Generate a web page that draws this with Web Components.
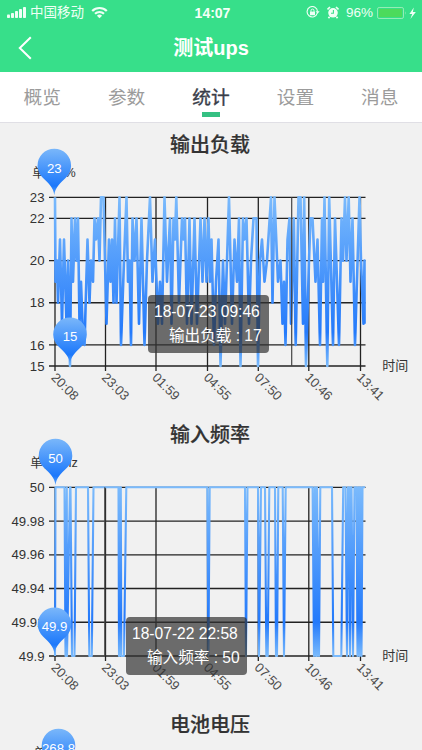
<!DOCTYPE html>
<html lang="zh-CN">
<head>
<meta charset="utf-8">
<title>测试ups</title>
<style>
  html, body { height: 100%; }
  body {
    margin: 0;
    overflow: hidden;
    background: #f1f1f1;
    font-family: "Liberation Sans", "Noto Sans CJK SC", sans-serif;
  }
</style>
</head>
<body>
<ups-app></ups-app>
<script>
customElements.define("status-bar", class extends HTMLElement {
  constructor() {
    super();
    this.attachShadow({ mode: "open" }).innerHTML = `
      <style>
        :host {
          display: grid;
          grid-template-columns: 1fr auto 1fr;
          align-items: center;
          height: 24px;
          padding: 0 6px 0 7px;
          color: #effff5;
          font-size: 13.5px;
          line-height: 24px;
        }
        div { display: flex; align-items: center; }
        .right { justify-content: flex-end; }
        .carrier { padding-top: 1px; }
        .time { font-weight: bold; font-size: 14px; color: #f4fff8; padding-left: 2px; }
        svg { display: block; flex: none; }
        .wifi { margin-left: 7px; }
        .lock { margin-right: 7px; }
        .alarm { margin-right: 7px; }
        .battery { margin-left: 4px; }
      </style>
      <div>
        <svg width="19" height="13" viewBox="0 0 19 13" fill="currentColor" style="margin-right:4px">
          <rect x="0" y="8.5" width="3" height="3.5" rx=".8"/><rect x="4" y="7" width="3" height="5" rx=".8"/>
          <rect x="8" y="5" width="3" height="7" rx=".8"/><rect x="12" y="3" width="3" height="9" rx=".8"/>
          <rect x="16" y="1" width="3" height="11" rx=".8"/>
        </svg>
        <span class="carrier">中国移动</span>
        <svg class="wifi" width="17" height="13" viewBox="0 0 17 13" fill="none" stroke="currentColor" stroke-width="2.2">
          <path d="M1.2 5a10.4 10.4 0 0 1 14.6 0M4 7.8a6.5 6.5 0 0 1 9 0"/>
          <path d="M8.5 12.2 5.9 9.7a3.8 3.8 0 0 1 5.2 0z" fill="currentColor" stroke="none"/>
        </svg>
      </div>
      <div class="time">14:07</div>
      <div class="right">
        <svg class="lock" width="14" height="13" viewBox="0 0 14 13" fill="none" stroke="currentColor">
          <path d="M11.3 7.2a5.2 5.2 0 1 1 .2-1.7" stroke-width="1.1"/>
          <path d="M9.6 5.2h4l-2 2.6z" fill="currentColor" stroke="none"/>
          <rect x="4" y="5.6" width="5" height="3.6" fill="currentColor" stroke="none"/>
          <path d="M5 5.8V4.6a1.5 1.5 0 0 1 3 0v1.2"/>
        </svg>
        <svg class="alarm" width="12" height="13" viewBox="0 0 12 13">
          <circle cx="6" cy="6.8" r="4.8" fill="currentColor"/>
          <path d="M.5 3.4 3 1M11.5 3.4 9 1M2.6 10.8l-1.2 1.3M9.4 10.8l1.2 1.3" stroke="currentColor" stroke-width="1.7"/>
          <path d="M6.4 4v3.2H4" stroke="#37df8a" stroke-width="1.1" fill="none"/>
        </svg>
        <span>96%</span>
        <svg class="battery" width="39" height="14" viewBox="0 0 39 14">
          <rect x=".5" y="1.5" width="26" height="11" rx="1.6" fill="none" stroke="#95edb4"/>
          <rect x="2" y="3" width="23" height="8" rx=".5" fill="#4cdb5c"/>
          <path d="M28 5.2q1.5 1.8 0 3.6z" fill="#95edb4"/>
          <path d="M36.8 1.5 32.4 7.9h2.8l-1.8 5 5.4-6.8h-2.9z" fill="#effff5"/>
        </svg>
      </div>
    `;
  }
});

customElements.define("nav-header", class extends HTMLElement {
  constructor() {
    super();
    this.attachShadow({ mode: "open" }).innerHTML = `
      <style>
        :host {
          display: grid;
          grid-template-columns: 50px 1fr 50px;
          align-items: center;
          height: 48px;
          color: #fff;
        }
        svg { display: block; margin-left: 18px; }
        h1 {
          margin: 0;
          text-align: center;
          font-size: 20px;
          line-height: 28px;
          font-weight: bold;
        }
      </style>
      <svg width="14" height="24" viewBox="0 0 14 24" fill="none" stroke="currentColor" stroke-width="2"><path d="M12.8 1.2 1.8 12l11 10.8"/></svg>
      <h1><slot></slot></h1>
    `;
  }
});

customElements.define("tab-bar", class extends HTMLElement {
  constructor() {
    super();
    this.attachShadow({ mode: "open" }).innerHTML = `
      <style>
        :host {
          display: grid;
          grid-template-columns: repeat(5, 1fr);
          box-sizing: border-box;
          height: 51px;
          background: #fff;
          border-bottom: 1px solid #e0dfe5;
          font-size: 18.7px;
          color: #9b9b9b;
        }
        ::slotted(span) {
          display: flex;
          flex-direction: column;
          align-items: center;
          height: 50px;
          line-height: 52px;
        }
        ::slotted(span[active]) {
          color: #393d49;
          -webkit-text-stroke: .35px #393d49;
          background: linear-gradient(#35c082, #35c082) center 40px / 18px 5px no-repeat;
        }
      </style>
      <slot></slot>
    `;
  }
});

customElements.define("chart-tooltip", class extends HTMLElement {
  constructor() {
    super();
    this.attachShadow({ mode: "open" }).innerHTML = `
      <style>
        :host {
          display: block;
          position: absolute;
          box-sizing: border-box;
          width: 121px;
          height: 58px;
          padding: 5px 0 0 6px;
          border-radius: 4px;
          background: rgba(50, 50, 50, .7);
          color: #fff;
          font-size: 15.6px;
          line-height: 24px;
          white-space: nowrap;
        }
        div { height: 24px; }
        .value { padding-left: 15px; }
      </style>
      <div><slot name="date"></slot></div>
      <div class="value"><slot></slot></div>
    `;
  }
});

const TIMES = [["20:08", 55], ["23:03", 105.5], ["01:59", 156], ["04:55", 207.5], ["07:50", 258.3], ["10:46", 308.8], ["13:41", 360.5]];
const TOP = 74.3, BOTTOM = 243;

// Value axis runs from config.max at TOP to config.min at BOTTOM.
customElements.define("stat-chart", class extends HTMLElement {
  constructor() {
    super();
    this.attachShadow({ mode: "open" });
  }

  set config(c) {
    const y = v => BOTTOM - (v - c.min) / (c.max - c.min) * (BOTTOM - TOP);

    const rows = c.ticks.map(t => `
      <path d="M49 ${y(t)}H365.5" class="grid"/>
      <text x="44.5" y="${y(t) + 4.7}" class="tick">${t}</text>`).join("");

    const times = c.data.length ? TIMES : [];
    const columns = times.map(([label, x]) => `
      <path d="M${x} ${TOP}V${BOTTOM + 5}" class="grid"/>
      <text transform="translate(${x - 4.6} ${BOTTOM + 12.2}) rotate(45)" class="time">${label}</text>`).join("");

    const pins = c.pins.map(([x, v]) => `
      <g transform="translate(${x} ${y(v)})">
        <path d="M0-2C-1-10-5-13-11.5-19.5A16.8 16.8 0 1 1 11.5-19.5C5-13 1-10 0-2z" fill="url(#pin)"/>
        <text y="-24.8" class="pin">${v}</text>
      </g>`).join("");

    const points = c.data.map(([x, v]) => `${x},${y(v).toFixed(1)}`).join(" ");

    this.shadowRoot.innerHTML = `
      <style>
        :host { display: block; position: relative; height: 290px; }
        h2 {
          margin: 0;
          padding: 8px 2px 0 0;
          height: 28px;
          text-align: center;
          font-size: 20px;
          line-height: 29px;
          font-weight: 500;
          color: #333;
          -webkit-text-stroke: .2px #333;
        }
        svg { display: block; margin-top: -36px; overflow: visible; }
        .grid { stroke: #222; stroke-width: 1.3; fill: none; }
        .pointer { stroke: #444; stroke-width: 1.2; }
        text { font-size: 13.2px; fill: #333; }
        .tick { text-anchor: end; }
        .time { fill: #4c4c4c; font-size: 13px; }
        .unit { font-size: 12.6px; text-anchor: middle; }
        .pin { fill: #fff; text-anchor: middle; }
      </style>
      <h2>${c.title}</h2>
      <svg width="422" height="290" viewBox="0 0 422 290">
        <defs>
          <linearGradient id="line" gradientUnits="userSpaceOnUse" x1="0" y1="${TOP}" x2="0" y2="${BOTTOM}">
            <stop offset="0" stop-color="#7abafc"/><stop offset=".8" stop-color="#247afb"/><stop offset="1" stop-color="#7abafc"/>
          </linearGradient>
          <linearGradient id="pin" x1="0" y1="0" x2="0" y2="1">
            <stop offset="0" stop-color="#7ab7fa"/><stop offset=".8" stop-color="#1c78fb"/><stop offset="1" stop-color="#5fa8fc"/>
          </linearGradient>
        </defs>
        ${rows}${columns}
        <text x="54" y="54" class="unit">${c.unit}</text>
        ${c.data.length ? `<text x="382.3" y="${BOTTOM + 4}" style="font-size:13px">时间</text>` : ""}
        <polyline points="${points}" fill="none" stroke="url(#line)" stroke-width="${c.width}" stroke-linejoin="round"/>
        ${c.pointer ? `<path d="M${c.pointer} ${TOP}V${BOTTOM}" class="pointer"/>` : ""}
        ${pins}
      </svg>
      <slot></slot>
    `;
  }
});

const load = [
  [55, 23], [55.5, 19], [57, 20], [58, 18], [60, 21], [62, 17], [64, 21], [66.5, 17], [68, 20], [70, 15], [71.5, 22], [73, 19],
  [75, 22], [76.5, 20], [78, 22], [79.5, 17], [81, 19], [82.5, 17], [84.5, 16], [87.5, 21], [89.5, 18], [91, 20], [93, 19], [94.5, 22],
  [96, 21], [98, 22], [99.5, 20], [101, 23], [103.5, 23], [106.5, 17], [109, 21], [110.5, 19], [112, 21], [113.5, 18],
  [115, 22], [116.5, 18], [119.5, 23], [121, 16], [124, 20], [126.5, 23], [128, 19], [129.5, 20], [131, 16], [132.5, 22],
  [134.5, 20], [136.5, 22], [139, 17], [141.5, 22], [144.5, 16], [147, 20], [150, 23], [152.5, 19], [155, 21], [158, 17], [160, 19], [162, 17],
  [164.5, 23], [167, 19], [170, 22], [171.5, 17], [173.5, 22], [175, 21], [176.3, 23], [179, 18], [182, 22], [183.5, 21],
  [185, 22], [187, 17], [189.5, 22], [191.5, 17], [194.5, 22], [197, 17], [200.5, 22], [202.5, 19], [204.5, 22], [206.5, 19], [208.5, 22],
  [210, 19], [211.5, 21], [214, 16], [216, 19], [218.5, 21], [220.5, 15], [223, 20], [225, 17], [229, 23], [232, 17],
  [234.5, 21], [237, 19], [239, 22], [240.5, 15], [243, 22], [244.5, 21], [246.5, 22], [249, 17], [251, 20], [253.5, 22],
  [256.5, 22], [258, 15], [260, 20], [262, 21], [264.5, 19], [267, 20], [271, 23], [272.5, 18], [274.5, 23], [278, 19],
  [280.5, 20], [282.5, 17], [284, 19], [285.5, 16], [287.5, 21], [289.5, 22], [291, 17], [293.8, 22], [295.7, 16],
  [298.5, 23], [300.5, 23], [303, 17], [304.2, 23], [306, 15], [309, 20], [310.5, 22], [312.5, 22], [315.5, 19], [317.5, 21],
  [320, 16], [322, 22], [323, 19], [324.5, 23], [327.3, 15], [329.2, 23], [333, 16], [335, 22], [339, 16], [341.5, 22],
  [343, 20], [345, 23], [346.5, 20], [348.7, 23], [350.5, 19], [352.5, 22], [355, 16], [359.5, 23], [361, 20], [363.5, 17], [364.5, 20], [364.5, 17]
];

const frequency = [[55, 49.9], [55.5, 50]];
// Dips to 49.9: start, bottom from, bottom to, end.
for (const [a, b, c, d] of [
  [64.5, 65.5, 65.5, 66.8], [66.8, 67, 67, 70], [70.5, 72, 74.5, 76], [88, 89.3, 91.8, 93.5], [118.5, 119, 119.3, 120.3],
  [120.8, 121.3, 124, 126.3], [207.3, 208.4, 208.4, 209.7], [245, 246, 246, 247.5], [258, 259, 259, 261],
  [265, 266.3, 267.7, 269.3], [275, 276, 277, 278.3], [282.7, 284, 284, 285.7], [312.6, 314, 314, 314.8],
  [315, 316, 317, 317], [317, 319, 319, 320.3], [332, 333.3, 341.3, 343.2], [345.5, 347, 347, 348],
  [349, 350, 350, 351], [351.5, 353, 353, 354.5], [356.5, 357.5, 357.5, 358.5], [358.8, 359.5, 359.5, 360.2], [360.5, 361.5, 361.5, 362.5]
]) frequency.push([a, 50], [b, 49.9], [c, 49.9], [d, 50]);
frequency.push([365, 50]);

customElements.define("ups-app", class extends HTMLElement {
  constructor() {
    super();
    this.attachShadow({ mode: "open" }).innerHTML = `
      <style>
        :host { display: flex; flex-direction: column; height: 750px; overflow: hidden; }
        header { flex: none; background: #37df8a; }
        tab-bar { flex: none; }
        main { flex: 1; min-height: 0; overflow: hidden; }
        #load chart-tooltip { left: 148px; top: 172px; }
        #frequency chart-tooltip { left: 126px; top: 204px; }
      </style>
      <header>
        <status-bar></status-bar>
        <nav-header>测试ups</nav-header>
      </header>
      <tab-bar><span>概览</span><span>参数</span><span active>统计</span><span>设置</span><span>消息</span></tab-bar>
      <main>
        <stat-chart id="load"><chart-tooltip><span slot="date">18-07-23 09:46</span>输出负载 : 17</chart-tooltip></stat-chart>
        <stat-chart id="frequency"><chart-tooltip><span slot="date">18-07-22 22:58</span>输入频率 : 50</chart-tooltip></stat-chart>
        <stat-chart id="voltage"></stat-chart>
      </main>
    `;
    const $ = id => this.shadowRoot.getElementById(id);
    $("load").config = {
      title: "输出负载", unit: "单位: %", min: 15, max: 23, ticks: [23, 22, 20, 18, 16, 15],
      pins: [[54.3, 23], [70, 15]], pointer: 291.7, data: load, width: 2.6
    };
    $("frequency").config = {
      title: "输入频率", unit: "单位: Hz", min: 49.9, max: 50, ticks: [50, 49.98, 49.96, 49.94, 49.92, 49.9],
      pins: [[55.5, 50], [54.5, 49.9]], pointer: 104.8, data: frequency, width: 2.1
    };
    $("voltage").config = {
      title: "电池电压", unit: "单位: V", min: 268, max: 268.8, ticks: [],
      pins: [[58.5, 268.8]], data: [], width: 2
    };
  }
});
</script>
</body>
</html>
